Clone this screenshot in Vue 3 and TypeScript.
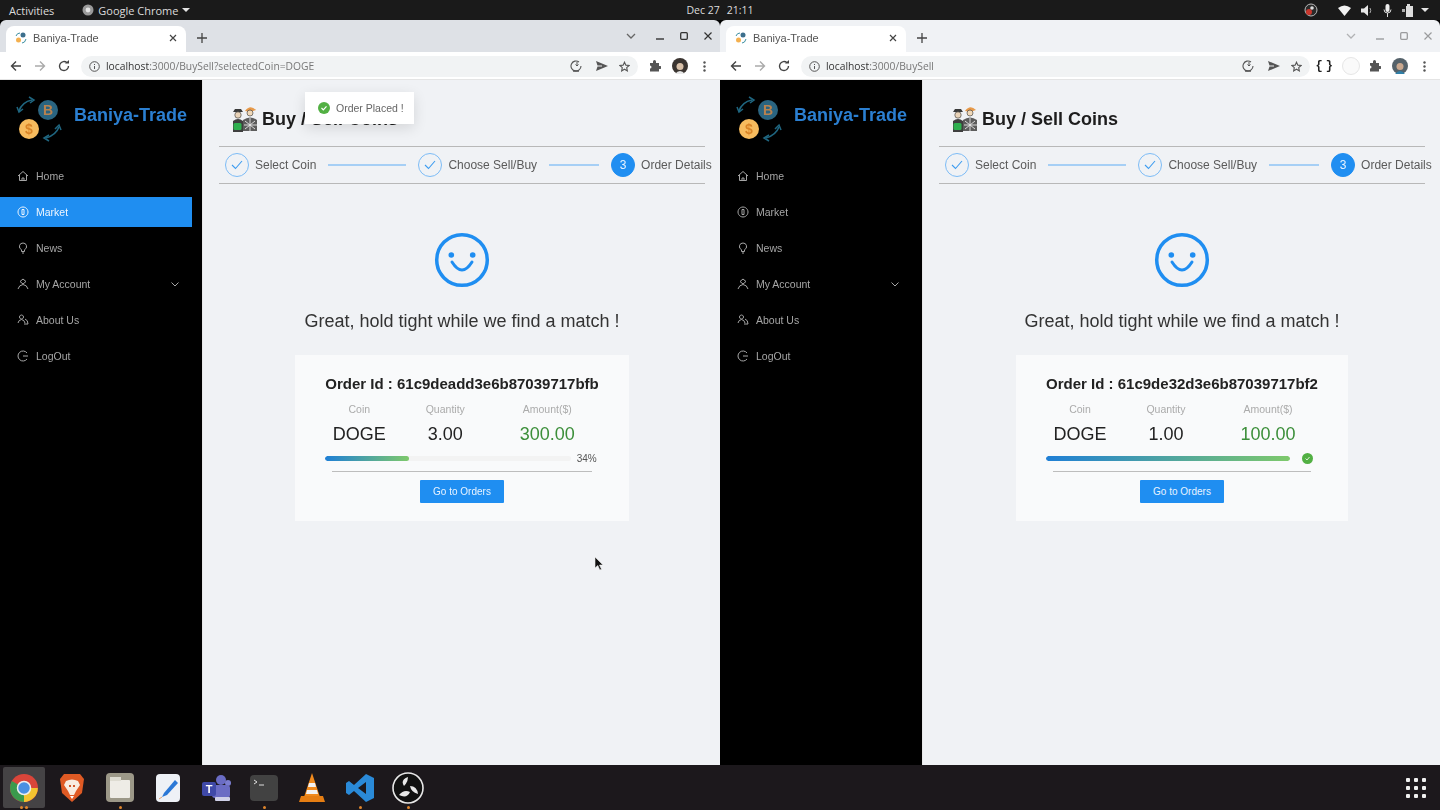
<template>
  <div class="screen">
    <header class="topbar">
      <div class="top-left">
        <span class="activities">Activities</span>
        <span class="app-name">
          <svg width="12" height="12" viewBox="0 0 12 12"><circle cx="6" cy="6" r="5.5" fill="#9a9a9a" /><circle cx="6" cy="6" r="2.4" fill="#e4e4e4" /></svg>
          Google Chrome
          <i class="caret"></i>
        </span>
      </div>
      <div class="clock"><span>Dec 27</span><span>21:11</span></div>
      <div class="tray">
        <svg class="tray-obs" width="14" height="14" viewBox="0 0 14 14"><circle cx="7" cy="7" r="6" fill="#2b2b2b" stroke="#bbb" /><circle cx="5" cy="9" r="3" fill="#c9362c" /><circle cx="8" cy="5" r="1.8" fill="#ddd" /></svg>
        <svg width="13" height="11" viewBox="0 0 13 11"><path d="M0 3 Q6.500 -2 13 3 L6.500 11 Z" fill="#f2f2f2" /></svg>
        <svg width="12" height="11" viewBox="0 0 12 11"><path d="M0 3.500H3L7 0V11L3 7.500H0Z" fill="#e8e8e8" /><path d="M9 3Q10.500 5.500 9 8" stroke="#aaa" fill="none" /></svg>
        <svg width="9" height="13" viewBox="0 0 9 13"><rect x="2.500" y="0" width="4" height="8" rx="2" fill="#eee" /><path d="M1 5.500Q1 9 4.500 9T8 5.500M4.500 9V13" stroke="#ddd" fill="none" /></svg>
        <svg width="12" height="13" viewBox="0 0 12 13"><path d="M4 2H5V0H8V2H11V13H4Z" fill="#ddd" /><path d="M0 5H3V8H0Z" fill="#aaa" /></svg>
        <i class="caret tray-caret"></i>
      </div>
    </header>

    <main class="desktop">
      <section v-for="win in windows" :key="win.orderId" class="window" :class="{ inactive: !win.focused }">
        <div class="tabstrip">
          <div class="tab">
            <svg width="12" height="12" viewBox="0 0 12 12"><circle cx="8" cy="3" r="2.500" fill="#3d6f8c" /><circle cx="3.500" cy="8" r="2.500" fill="#f4b04f" /><path d="M1 4Q2 1 5 1M11 7Q10 11 7 11" stroke="#3d8fa0" fill="none" /></svg>
            <span class="tab-title">Baniya-Trade</span>
            <svg class="tab-close" width="8" height="8" viewBox="0 0 8 8"><path d="M1 1L7 7M7 1L1 7" stroke="#444" stroke-width="1.200" /></svg>
          </div>
          <svg class="new-tab" width="10" height="10" viewBox="0 0 10 10"><path d="M5 0V10M0 5H10" stroke="#444" stroke-width="1.300" /></svg>
          <div class="win-controls">
            <svg width="10" height="6" viewBox="0 0 10 6"><path d="M1 1L5 5L9 1" stroke="#666" stroke-width="1.300" fill="none" /></svg>
            <svg width="8" height="8" viewBox="0 0 8 8"><path d="M0 7H8" stroke="#333" stroke-width="1.400" /></svg>
            <svg width="8" height="8" viewBox="0 0 8 8"><rect x="0.700" y="0.700" width="6.600" height="6.600" rx="1" stroke="#333" stroke-width="1.300" fill="none" /></svg>
            <svg width="8" height="8" viewBox="0 0 8 8"><path d="M0.500 0.500L7.500 7.500M7.500 0.500L0.500 7.500" stroke="#333" stroke-width="1.200" /></svg>
          </div>
        </div>

        <div class="toolbar">
          <svg class="nav-icon" width="12" height="12" viewBox="0 0 12 12"><path d="M11 6H1.500M6 1.500L1.500 6L6 10.500" stroke="#444" stroke-width="1.400" fill="none" /></svg>
          <svg class="nav-icon" width="12" height="12" viewBox="0 0 12 12"><path d="M1 6H10.500M6 1.500L10.500 6L6 10.500" stroke="#aaa" stroke-width="1.400" fill="none" /></svg>
          <svg class="nav-icon" width="12" height="12" viewBox="0 0 12 12"><path d="M10.500 6A4.500 4.500 0 1 1 9 2.700" stroke="#444" stroke-width="1.400" fill="none" /><path d="M7 3.500H11V0Z" fill="#444" /></svg>
          <div class="omnibox" :style="{ width: win.omniWidth + 'px' }">
            <svg width="11" height="11" viewBox="0 0 11 11"><circle cx="5.500" cy="5.500" r="4.800" stroke="#555" fill="none" /><path d="M5.500 5V8M5.500 3V4" stroke="#555" /></svg>
            <span class="url"><b>localhost</b>{{ win.path }}</span>
            <svg class="omni-first" width="12" height="12" viewBox="0 0 12 12"><path d="M9 2A5 5 0 1 0 11 6" stroke="#555" stroke-width="1.100" fill="none" /><path d="M7 2V6M5.500 4.500L7 6L8.500 4.500" stroke="#555" fill="none" /><path d="M3 11H9" stroke="#555" stroke-width="1.500" /></svg>
            <svg width="12" height="10" viewBox="0 0 12 10"><path d="M0 0L12 5L0 10L1.500 5.500H6V4.500H1.500Z" fill="#555" /></svg>
            <svg width="11" height="11" viewBox="0 0 24 24"><path d="M12 2.500L15 9L22 9.800L16.800 14.500L18.200 21.500L12 18L5.800 21.500L7.200 14.500L2 9.800L9 9Z" stroke="#555" stroke-width="2.400" fill="none" /></svg>
          </div>
          <div class="tool-right">
            <template v-if="!win.focused">
              <span class="braces">{ }</span>
              <span class="ext-circle"></span>
            </template>
            <svg width="12" height="12" viewBox="0 0 12 12"><path d="M1 3H4V1.500A1.400 1.400 0 0 1 7 1.500V3H10V6H11.200A1.400 1.400 0 0 1 11.200 9H10V11.500H1V8.500A1.500 1.500 0 0 0 1 5.500Z" fill="#555" /></svg>
            <svg width="16" height="16" viewBox="0 0 16 16"><circle cx="8" cy="8" r="8" :fill="win.focused ? '#3a3430' : '#55626a'" /><circle cx="8" cy="8.500" r="3.500" :fill="win.focused ? '#d8c0a8' : '#c9a88f'" /><path d="M3 16Q8 10 13 16Z" :fill="win.focused ? '#e8e8e8' : '#2f7fa8'" /></svg>
            <svg class="kebab" width="3" height="11" viewBox="0 0 3 11"><circle cx="1.500" cy="1.500" r="1.200" fill="#555" /><circle cx="1.500" cy="5.500" r="1.200" fill="#555" /><circle cx="1.500" cy="9.500" r="1.200" fill="#555" /></svg>
          </div>
        </div>

        <div class="page">
          <aside class="sidebar">
            <div class="brand">
              <svg width="48" height="48" viewBox="0 0 48 48">
                <path d="M3 15Q6 6 16 4" stroke="#1f6680" stroke-width="1.600" fill="none" />
                <path d="M13 1L18 4L14 7M1 11L3 16L7 13" stroke="#1f6680" stroke-width="1.500" fill="none" />
                <circle cx="32" cy="14" r="10" fill="#2a6480" />
                <text x="32" y="19" class="coin-text" fill="#b8824f">B</text>
                <circle cx="13" cy="33" r="10" fill="#f7bb5e" />
                <text x="13" y="38" class="coin-text" fill="#d98326">$</text>
                <path d="M43 31Q40 39 30 42" stroke="#1f6680" stroke-width="1.600" fill="none" />
                <path d="M33 39L28 42L33 45M39 33L43 29L45 34" stroke="#1f6680" stroke-width="1.500" fill="none" />
              </svg>
              <span class="brand-name">Baniya-Trade</span>
            </div>
            <nav class="menu">
              <a v-for="item in menu" :key="item.label" class="menu-item" :class="{ active: win.focused && item.label === 'Market' }">
                <svg width="12" height="12" viewBox="0 0 12 12" fill="none" stroke="currentColor" stroke-width="1">
                  <path v-for="d in item.paths" :key="d" :d="d" />
                </svg>
                <span>{{ item.label }}</span>
                <svg v-if="item.label === 'My Account'" class="chev" width="8" height="5" viewBox="0 0 8 5"><path d="M0.500 0.500L4 4L7.500 0.500" stroke="currentColor" fill="none" /></svg>
              </a>
            </nav>
          </aside>

          <div class="content">
            <div class="heading">
              <svg width="28" height="28" viewBox="0 0 28 28">
                <path d="M3 7H13L11 4H5Z" fill="#3a3a3a" />
                <circle cx="8" cy="10" r="3.200" fill="#e9d3b8" stroke="#333" stroke-width="0.600" />
                <path d="M3 27V16Q8 12 13 16V27Z" fill="#3f3f3f" />
                <rect x="3.500" y="18" width="8" height="7" rx="1.500" fill="#2fb04f" />
                <path d="M15 6Q20 -1 26 5L20 7Z" fill="#e79a4a" />
                <circle cx="20" cy="8" r="3" fill="#f0d8b8" stroke="#333" stroke-width="0.600" />
                <path d="M13 26V15Q20 10 27 15V26Z" fill="#5c5c5c" />
                <path d="M15 16L25 24M25 16L15 24M20 13V26M14 20H27" stroke="#e8e8e8" stroke-width="0.900" />
              </svg>
              <h1>Buy / Sell Coins</h1>
            </div>

            <div class="steps">
              <template v-for="(step, i) in steps" :key="step.label">
                <span class="step-circle" :class="{ current: i === 2 }">
                  <svg v-if="i < 2" width="12" height="10" viewBox="0 0 12 10"><path d="M1 5L4.500 8.500L11 1" stroke="#3d9cf0" stroke-width="1.100" fill="none" /></svg>
                  <template v-else>3</template>
                </span>
                <span class="step-label">{{ step.label }}</span>
                <span v-if="step.line" class="step-line" :style="{ width: step.line + 'px' }"></span>
              </template>
            </div>

            <div class="result">
              <svg class="smile" width="56" height="56" viewBox="0 0 56 56">
                <circle cx="28" cy="28" r="25.300" stroke="#1f8ef1" stroke-width="3.500" fill="none" />
                <circle cx="17.300" cy="23" r="2.800" fill="#1f8ef1" />
                <circle cx="38.700" cy="23" r="2.800" fill="#1f8ef1" />
                <path d="M18 30Q28 46 38 30" stroke="#1f8ef1" stroke-width="3" fill="none" stroke-linecap="round" />
              </svg>
              <p class="subtitle">Great, hold tight while we find a match !</p>

              <div class="card">
                <h2>Order Id : {{ win.orderId }}</h2>
                <div class="cols">
                  <div class="col">
                    <span class="col-label">Coin</span>
                    <span class="col-value">DOGE</span>
                  </div>
                  <div class="col">
                    <span class="col-label">Quantity</span>
                    <span class="col-value">{{ win.quantity }}</span>
                  </div>
                  <div class="col">
                    <span class="col-label">Amount($)</span>
                    <span class="col-value amount">{{ win.amount }}</span>
                  </div>
                </div>
                <div class="progress">
                  <div class="track"><div class="fill" :style="{ width: win.percent + '%' }"></div></div>
                  <span v-if="win.percent < 100" class="percent">{{ win.percent }}%</span>
                  <span v-else class="done">
                    <svg width="11" height="11" viewBox="0 0 11 11"><circle cx="5.500" cy="5.500" r="5.500" fill="#52b043" /><path d="M3.500 5.500L5 7L7.500 4" stroke="#d9f2d3" fill="none" /></svg>
                  </span>
                </div>
                <div class="divider"></div>
                <button class="orders-btn">Go to Orders</button>
              </div>
            </div>

            <div v-if="win.focused" class="toast">
              <svg width="12" height="12" viewBox="0 0 12 12"><circle cx="6" cy="6" r="6" fill="#52b043" /><path d="M3.500 6L5.300 7.800L8.500 4.300" stroke="#fff" stroke-width="1.200" fill="none" /></svg>
              <span>Order Placed !</span>
            </div>
            <svg v-if="win.focused" class="cursor" width="10" height="15" viewBox="0 0 10 15"><path d="M1 1V12L3.800 9.500L5.800 14L7.500 13.200L5.500 9H9Z" fill="#111" stroke="#eee" stroke-width="0.600" /></svg>
          </div>
        </div>
      </section>
    </main>

    <footer class="dock">
      <span class="dock-item running">
        <svg width="30" height="30" viewBox="0 0 30 30">
          <circle cx="15" cy="15" r="14" fill="#d9453a" />
          <path d="M15 15L2.900 8A14 14 0 0 0 15 29L22 17Z" fill="#3a9a4c" />
          <path d="M15 15H28.800A14 14 0 0 1 15 29Z" fill="#f4c430" />
          <circle cx="15" cy="15" r="6.500" fill="#4a90e2" stroke="#eee" stroke-width="1.500" />
        </svg>
      </span>
      <span class="dock-item">
        <svg width="26" height="30" viewBox="0 0 26 30"><path d="M5 1H21L25 6L23 20L13 29L3 20L1 6Z" fill="#df5a24" /><path d="M7 8Q13 5 19 8L21 12L17 18L15 22H11L9 18L5 12Z" fill="#f8ece0" /><path d="M10 12H12V14H10ZM14 12H16V14H14Z" fill="#d0582a" /><path d="M11 23H15L13 26Z" fill="#fff" /></svg>
      </span>
      <span class="dock-item dot">
        <svg width="28" height="29" viewBox="0 0 28 29"><rect width="28" height="29" rx="4" fill="#9c9888" /><rect x="4" y="7" width="20" height="18" rx="1" fill="#eeece6" /><rect x="4" y="4" width="11" height="4" fill="#dedcd2" /></svg>
      </span>
      <span class="dock-item">
        <svg width="24" height="28" viewBox="0 0 24 28"><rect width="24" height="28" rx="4" fill="#eef1f6" /><path d="M8 19L19 6L22 9L11 21L6 23Z" fill="#2b78d6" /><path d="M6 23L3 25" stroke="#e0a070" /></svg>
      </span>
      <span class="dock-item">
        <svg width="30" height="28" viewBox="0 0 30 28"><circle cx="20" cy="6" r="5" fill="#6a6cc4" /><circle cx="27" cy="9" r="3" fill="#7b7dd0" /><rect x="11" y="11" width="18" height="13" rx="3" fill="#6a6cc4" /><rect x="1" y="8" width="14" height="14" rx="2" fill="#3f49a8" /><text x="8" y="19" class="teams-t">T</text><rect x="14" y="23" width="15" height="4" rx="1" fill="#cfd0e8" /></svg>
      </span>
      <span class="dock-item dot">
        <svg width="28" height="26" viewBox="0 0 28 26"><rect width="28" height="26" rx="4" fill="#424242" /><path d="M4 5L7 7L4 9M9 10H14" stroke="#ddd" fill="none" /></svg>
      </span>
      <span class="dock-item">
        <svg width="26" height="30" viewBox="0 0 26 30"><path d="M13 0L21 24H5Z" fill="#f08a1d" /><path d="M10 10H16L17 14H9ZM8 17H18L19 21H7Z" fill="#f2f2f2" /><path d="M2 23H24L26 29H0Z" fill="#e67e13" /></svg>
      </span>
      <span class="dock-item dot">
        <svg width="28" height="28" viewBox="0 0 28 28"><path d="M20 0L28 4V24L20 28L8 17L3 21L0 19V9L3 7L8 11ZM20 8L12 14L20 20Z" fill="#2a8ad8" /></svg>
      </span>
      <span class="dock-item dot">
        <svg width="32" height="32" viewBox="0 0 32 32"><circle cx="16" cy="16" r="15" fill="#111" stroke="#e8e8e8" stroke-width="1.600" /><path d="M16 5Q8 8 12 14Q16 10 16 5ZM26 22Q25 14 18 14Q19 20 26 22ZM7 23Q15 27 18 20Q12 17 7 23Z" fill="#e8e8e8" /></svg>
      </span>
      <span class="apps-grid">
        <i v-for="n in 9" :key="n"></i>
      </span>
    </footer>
  </div>
</template>

<script setup lang="ts">
interface BrowserWin {
  focused: boolean
  path: string
  omniWidth: number
  orderId: string
  quantity: string
  amount: string
  percent: number
}

const windows: BrowserWin[] = [
  {
    focused: true,
    path: ':3000/BuySell?selectedCoin=DOGE',
    omniWidth: 557,
    orderId: '61c9deadd3e6b87039717bfb',
    quantity: '3.00',
    amount: '300.00',
    percent: 34
  },
  {
    focused: false,
    path: ':3000/BuySell',
    omniWidth: 509,
    orderId: '61c9de32d3e6b87039717bf2',
    quantity: '1.00',
    amount: '100.00',
    percent: 100
  }
]

const menu = [
  { label: 'Home', paths: ['M1 6L6 1.500L11 6', 'M2.500 5V10.500H9.500V5', 'M5 10.500V8H7V10.500'] },
  { label: 'Market', paths: ['M6 1A5 5 0 1 0 6.010 1', 'M5 3.500H7V8.500H5Z'] },
  { label: 'News', paths: ['M6 1A3.500 3.500 0 0 0 4.500 7.700V9.500H7.500V7.700A3.500 3.500 0 0 0 6 1', 'M5 11H7'] },
  { label: 'My Account', paths: ['M6 1L9 3.500L6 6L3 3.500Z', 'M1 11Q2 7 6 6.500Q10 7 11 11'] },
  { label: 'About Us', paths: ['M4.500 1A2 2 0 1 0 4.510 1', 'M1 9Q1.500 6 4.500 5.500Q7.500 6 8 9', 'M8 5Q11 6 11 10H7'] },
  { label: 'LogOut', paths: ['M10 3A5 5 0 1 0 10 9', 'M6 6H11'] }
]

const steps = [
  { label: 'Select Coin', line: 78 },
  { label: 'Choose Sell/Buy', line: 50 },
  { label: 'Order Details', line: 0 }
]
</script>

<style>
html,
body {
  margin: 0;
  background: #000;
}
</style>

<style scoped>
.screen {
  width: 1440px;
  height: 810px;
  display: flex;
  flex-direction: column;
  overflow: hidden;
  font-family: "Liberation Sans", Arial, sans-serif;
  filter: blur(0.55px);
}

.topbar {
  height: 20px;
  flex: none;
  background: #1a1a1a;
  color: #dcdcdc;
  display: grid;
  grid-template-columns: 1fr auto 1fr;
  align-items: center;
  font-family: "Open Sans", sans-serif;
  font-size: 11px;
}

.top-left {
  display: flex;
  align-items: center;
  padding-left: 9px;
  gap: 28px;
}

.app-name {
  display: flex;
  align-items: center;
  gap: 4px;
}

.caret {
  width: 0;
  height: 0;
  border-left: 4px solid transparent;
  border-right: 4px solid transparent;
  border-top: 4px solid #e4e4e4;
}

.clock {
  display: flex;
  gap: 7px;
  font-size: 10.500px;
}

.tray {
  display: flex;
  align-items: center;
  justify-content: flex-end;
  gap: 10px;
  padding-right: 11px;
}

.tray-obs {
  margin-right: 10px;
}

.tray-caret {
  margin-left: -3px;
}

.desktop {
  flex: 1;
  min-height: 0;
  display: flex;
}

.window {
  width: 720px;
  display: flex;
  flex-direction: column;
  position: relative;
}

.tabstrip {
  height: 32px;
  flex: none;
  background: #dee1e6;
  border-radius: 6px 6px 0 0;
  display: flex;
  align-items: flex-end;
  padding-left: 6px;
}

.inactive .tabstrip {
  background: #f0f2f5;
}

.tab {
  width: 180px;
  height: 26px;
  box-sizing: border-box;
  background: #fff;
  border-radius: 8px 8px 0 0;
  display: flex;
  align-items: center;
  padding: 0 9px 2px;
  gap: 6px;
}

.tab-title {
  font-size: 11px;
  color: #555;
  flex: 1;
}

.new-tab {
  margin: 0 0 9px 11px;
}

.win-controls {
  margin-left: auto;
  height: 32px;
  display: flex;
  align-items: center;
  padding-right: 8px;
  gap: 16px;
}

.win-controls svg:first-child {
  margin-right: 4px;
}

.inactive .win-controls svg {
  opacity: 0.45;
}

.toolbar {
  height: 28px;
  flex: none;
  background: #fff;
  display: flex;
  align-items: center;
  padding-left: 10px;
  box-shadow: inset 0 -1px 0 #e4e4e4;
}

.nav-icon {
  margin-right: 12px;
}

.omnibox {
  height: 21px;
  margin-left: -1px;
  flex: none;
  box-sizing: border-box;
  background: #f1f3f4;
  border-radius: 11px;
  display: flex;
  align-items: center;
  gap: 11px;
  padding: 0 8px;
}

.url {
  font-family: "Open Sans", sans-serif;
  font-size: 10.300px;
  color: #777;
  margin-left: -5px;
}

.url b {
  font-weight: 400;
  color: #333;
}

.omni-first {
  margin-left: auto;
  margin-right: 3px;
}

.tool-right {
  flex: 1;
  display: flex;
  align-items: center;
  justify-content: flex-end;
  gap: 11px;
  padding-right: 14px;
}

.kebab {
  margin-left: 4px;
}

.braces {
  font-family: "Liberation Mono", monospace;
  font-weight: 700;
  font-size: 12px;
  letter-spacing: -2px;
  color: #222;
}

.ext-circle {
  width: 18px;
  height: 18px;
  box-sizing: border-box;
  border: 1px solid #e6e6e6;
  border-radius: 50%;
  background: #fafafa;
  margin-right: -2px;
}

.page {
  flex: 1;
  min-height: 0;
  display: flex;
}

.sidebar {
  width: 202px;
  flex: none;
  background: #000;
  border-right: 1px solid #e8e8e8;
  box-sizing: content-box;
}

.brand {
  height: 80px;
  box-sizing: border-box;
  display: flex;
  align-items: flex-start;
  padding: 16px 0 0 16px;
  gap: 10px;
}

.brand-name {
  font-size: 18px;
  font-weight: 700;
  color: #2b7fd1;
  line-height: 38px;
}

.coin-text {
  font-family: "Liberation Sans", sans-serif;
  font-size: 14px;
  font-weight: 700;
  text-anchor: middle;
}

.teams-t {
  font-family: "Liberation Sans", sans-serif;
  font-size: 11px;
  font-weight: 700;
  fill: #fff;
  text-anchor: middle;
}

.menu {
  display: flex;
  flex-direction: column;
  gap: 6px;
  padding-top: 1px;
}

.menu-item {
  height: 30px;
  width: 192px;
  box-sizing: border-box;
  display: flex;
  align-items: center;
  gap: 7px;
  padding: 0 13px 0 17px;
  font-size: 10.500px;
  color: #a6a6a6;
}

.menu-item.active {
  background: #1f8ef1;
  color: #eef6ff;
}

.chev {
  margin-left: auto;
}

.content {
  flex: 1;
  min-width: 0;
  background: #f0f2f5;
  padding: 0 15px 0 16px;
  position: relative;
}

.heading {
  height: 66px;
  box-sizing: border-box;
  padding: 12px 0 0 11px;
  display: flex;
  align-items: center;
  gap: 4px;
}

.heading h1 {
  margin: 0;
  font-size: 18px;
  font-weight: 700;
  color: #1d1d1d;
}

.steps {
  height: 38px;
  box-sizing: border-box;
  border-top: 1px solid #b8b8b8;
  border-bottom: 1px solid #b8b8b8;
  display: flex;
  align-items: center;
  padding-left: 6px;
  white-space: nowrap;
}

.step-circle {
  width: 24px;
  height: 24px;
  flex: none;
  box-sizing: border-box;
  border: 1px solid #7dbcf5;
  border-radius: 50%;
  display: flex;
  align-items: center;
  justify-content: center;
  font-size: 12px;
}

.step-circle.current {
  background: #1f8ef1;
  color: #e8f3ff;
  border-color: #1f8ef1;
}

.step-label {
  flex: none;
  font-size: 12px;
  color: #5a5a5a;
  margin-left: 6px;
}

.step-line {
  flex: none;
  height: 2px;
  background: #a6cff5;
  margin: 0 12px;
}

.result {
  display: flex;
  flex-direction: column;
  align-items: center;
  padding-top: 48px;
}

.smile {
  display: block;
}

.subtitle {
  margin: 21px 0 0;
  font-size: 18px;
  line-height: 24px;
  color: #333;
}

.card {
  margin-top: 22px;
  background: #f9fafb;
  padding: 19px 30px 18px;
  display: flex;
  flex-direction: column;
  align-items: stretch;
}

.card h2 {
  margin: 0;
  font-size: 15px;
  line-height: 20px;
  font-weight: 700;
  color: #222;
  text-align: center;
  white-space: nowrap;
}

.cols {
  display: flex;
  margin-top: 8px;
}

.col {
  display: flex;
  flex-direction: column;
  align-items: center;
  gap: 6px;
  width: 68px;
}

.col:nth-child(2) {
  width: 104px;
}

.col:nth-child(3) {
  width: 100px;
}

.col-label {
  font-size: 10.500px;
  line-height: 14px;
  color: #ababab;
}

.col-value {
  font-size: 18px;
  line-height: 24px;
  color: #222;
}

.col-value.amount {
  color: #3c8f3a;
}

.progress {
  display: flex;
  align-items: center;
  height: 12px;
  margin-top: 6px;
}

.track {
  flex: 1;
  height: 5px;
  border-radius: 3px;
  background: #f3f3f3;
  overflow: hidden;
}

.fill {
  height: 100%;
  border-radius: 3px;
  background: linear-gradient(90deg, #1f7fd6, #7ec96b);
}

.percent {
  width: 22px;
  margin-left: 6px;
  font-size: 10px;
  color: #555;
  white-space: nowrap;
}

.done {
  width: 22px;
  margin-left: 6px;
  display: flex;
  justify-content: center;
}

.divider {
  height: 1px;
  background: #bdbdbd;
  margin: 7px 7px 0;
}

.orders-btn {
  align-self: center;
  width: 84px;
  height: 23px;
  margin-top: 8px;
  padding: 0;
  border: 0;
  border-radius: 1px;
  background: #1f8ef1;
  color: #e8f3ff;
  font-family: inherit;
  font-size: 10px;
}

.toast {
  position: absolute;
  left: 102px;
  top: 12px;
  width: 109px;
  height: 32px;
  box-sizing: border-box;
  padding-left: 13px;
  display: flex;
  align-items: center;
  gap: 6px;
  background: #fff;
  box-shadow: 0 4px 14px rgba(0, 0, 0, 0.12);
  font-size: 10.500px;
  color: #666;
  white-space: nowrap;
}

.cursor {
  position: absolute;
  left: 391px;
  top: 476px;
}

.dock {
  height: 45px;
  flex: none;
  background: #1c181c;
  display: flex;
  align-items: center;
  padding-left: 0;
  position: relative;
}

.dock-item {
  width: 48px;
  height: 45px;
  flex: none;
  display: flex;
  align-items: center;
  justify-content: center;
  position: relative;
}

.dock-item.running::before {
  content: "";
  position: absolute;
  left: 3px;
  right: 3px;
  top: 2px;
  bottom: 2px;
  background: #454345;
  border-radius: 2px;
}

.dock-item svg {
  position: relative;
}

.dock-item.dot::after,
.dock-item.running::after {
  content: "";
  position: absolute;
  left: 23px;
  bottom: 1px;
  width: 3px;
  height: 3px;
  border-radius: 50%;
  background: #e0852b;
}

.dock-item.running::after {
  left: 20px;
  box-shadow: 5px 0 0 #e0852b;
}

.apps-grid {
  margin-left: auto;
  margin-right: 14px;
  display: grid;
  grid-template-columns: repeat(3, 4px);
  gap: 4px;
}

.apps-grid i {
  width: 4px;
  height: 4px;
  background: #f0f0f0;
  border-radius: 1px;
}
</style>
